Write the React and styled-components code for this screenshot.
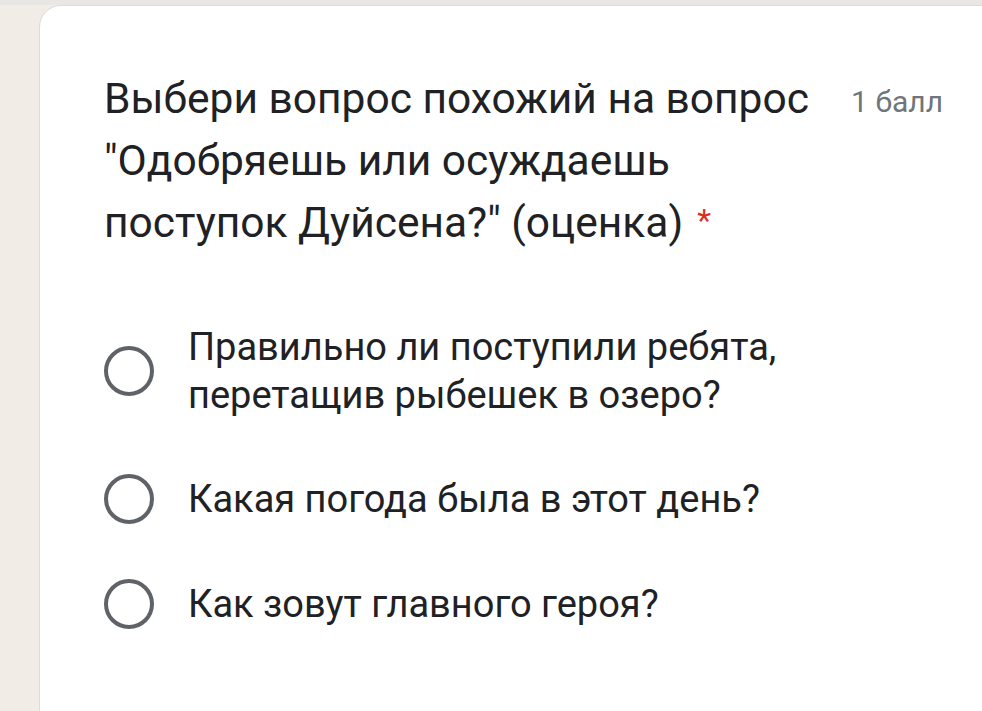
import styled, { createGlobalStyle } from "styled-components";

const GlobalStyle = createGlobalStyle`
  html, body {
    margin: 0;
    padding: 0;
    background: #f2ece6;
    font-family: Roboto, "Noto Sans", Arial, sans-serif;
    overflow: hidden;
  }
`;

const options = [
  ["Правильно ли поступили ребята,", "перетащив рыбешек в озеро?"],
  ["Какая погода была в этот день?"],
  ["Как зовут главного героя?"],
];

export default function App() {
  return (
    <>
      <GlobalStyle />
      <Page>
        <Card>
          <Header>
            <Title>
              Выбери вопрос похожий на вопрос
              <br />
              "Одобряешь или осуждаешь
              <br />
              поступок Дуйсена?" (оценка)<Required>*</Required>
            </Title>
            <Points>1 балл</Points>
          </Header>
          <OptionList>
            {options.map((lines) => (
              <Option key={lines[0]}>
                <Radio />
                <OptionText>
                  {lines.map((line, i) => (
                    <span key={line}>
                      {i > 0 && <br />}
                      {line}
                    </span>
                  ))}
                </OptionText>
              </Option>
            ))}
          </OptionList>
        </Card>
      </Page>
    </>
  );
}

const Page = styled.div`
  height: 711px;
  padding: 5px 0 0 39px;
  box-sizing: border-box;
  background: linear-gradient(#e8e7e5 0 5px, transparent 5px);
`;

const Card = styled.div`
  height: 760px;
  margin-right: -40px;
  background: #fff;
  border: 1.5px solid #dcdcdc;
  border-radius: 22px;
  padding: 62px 0 0 64px;
  box-sizing: border-box;
`;

const Header = styled.div`
  display: flex;
  align-items: flex-start;
  padding-right: 78px;
`;

const Title = styled.div`
  flex: 1;
  font-size: 42.5px;
  line-height: 62px;
  color: #202124;
  white-space: nowrap;
`;

const Required = styled.span`
  color: #d93025;
  margin-left: 14px;
  font-size: 32px;
  vertical-align: top;
  line-height: 56px;
`;

const Points = styled.div`
  margin-left: auto;
  margin-top: 14px;
  font-size: 30px;
  line-height: 40px;
  color: #70757a;
  white-space: nowrap;
`;

const OptionList = styled.div`
  display: flex;
  flex-direction: column;
  gap: 55px;
  margin-top: 69px;
`;

const Option = styled.div`
  display: flex;
  align-items: center;
  gap: 34px;
`;

const Radio = styled.div`
  flex: none;
  width: 42px;
  height: 42px;
  border: 4.5px solid #5f6368;
  border-radius: 50%;
`;

const OptionText = styled.div`
  font-size: 38px;
  line-height: 48px;
  color: #202124;
  white-space: nowrap;
`;
